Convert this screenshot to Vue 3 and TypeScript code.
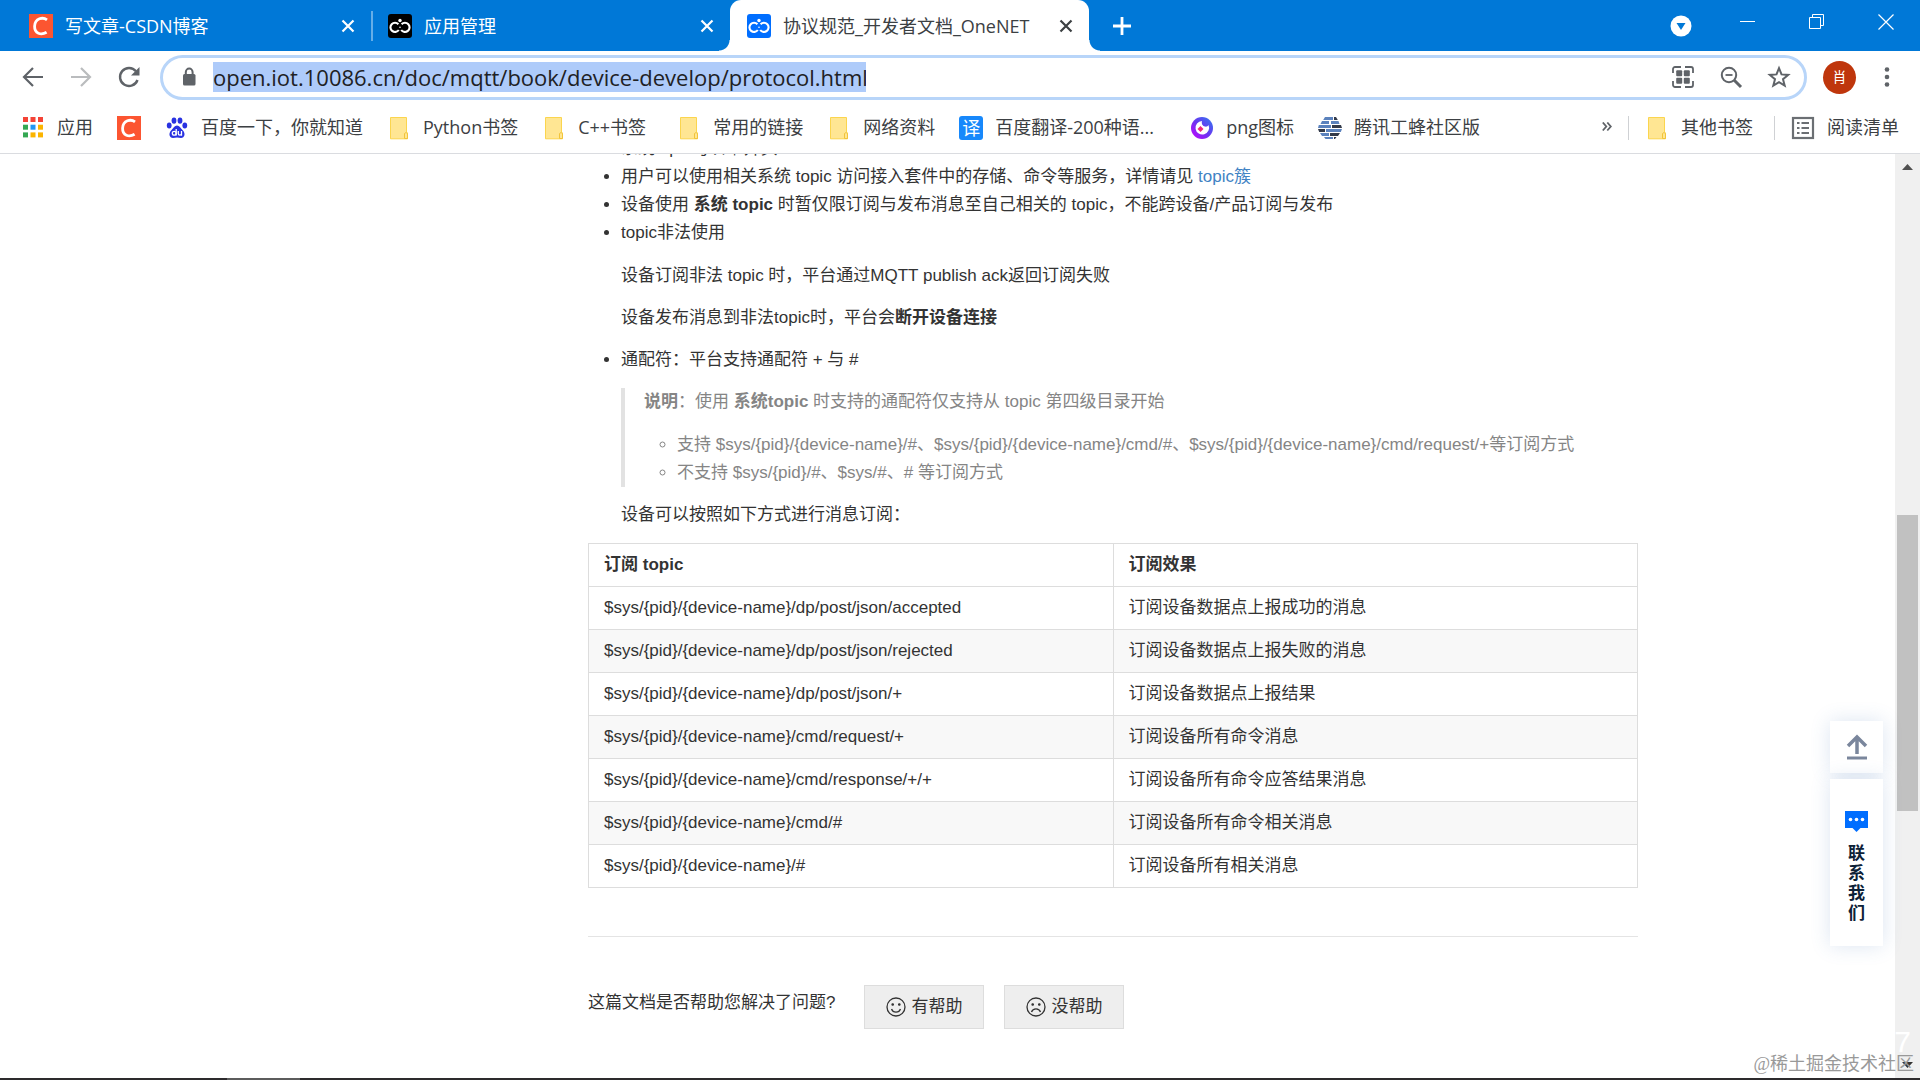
<script setup lang="ts">
import { ref } from 'vue'

interface Tab { title: string; icon: 'csdn' | 'onenet-dark' | 'onenet'; active: boolean }
interface Bookmark { label: string; icon: string; size?: 'wide' | 'short' }
interface Row { topic: string; effect: string }

const url = ref('open.iot.10086.cn/doc/mqtt/book/device-develop/protocol.html')

const tabs: Tab[] = [
  { title: '写文章-CSDN博客', icon: 'csdn', active: false },
  { title: '应用管理', icon: 'onenet-dark', active: false },
  { title: '协议规范_开发者文档_OneNET', icon: 'onenet', active: true },
]

const bookmarks: Bookmark[] = [
  { label: '应用', icon: 'apps' },
  { label: '', icon: 'csdn' },
  { label: '百度一下，你就知道', icon: 'baidu' },
  { label: 'Python书签', icon: 'folder' },
  { label: 'C++书签', icon: 'folder', size: 'short' },
  { label: '常用的链接', icon: 'folder' },
  { label: '网络资料', icon: 'folder' },
  { label: '百度翻译-200种语...', icon: 'fanyi', size: 'wide' },
  { label: 'png图标', icon: 'png' },
  { label: '腾讯工蜂社区版', icon: 'gongfeng' },
]

const appColors = ['#f44336', '#f44336', '#f44336', '#34a853', '#2196f3', '#fbb400', '#34a853', '#fbb400', '#fbb400']

const rows: Row[] = [
  { topic: '$sys/{pid}/{device-name}/dp/post/json/accepted', effect: '订阅设备数据点上报成功的消息' },
  { topic: '$sys/{pid}/{device-name}/dp/post/json/rejected', effect: '订阅设备数据点上报失败的消息' },
  { topic: '$sys/{pid}/{device-name}/dp/post/json/+', effect: '订阅设备数据点上报结果' },
  { topic: '$sys/{pid}/{device-name}/cmd/request/+', effect: '订阅设备所有命令消息' },
  { topic: '$sys/{pid}/{device-name}/cmd/response/+/+', effect: '订阅设备所有命令应答结果消息' },
  { topic: '$sys/{pid}/{device-name}/cmd/#', effect: '订阅设备所有命令相关消息' },
  { topic: '$sys/{pid}/{device-name}/#', effect: '订阅设备所有相关消息' },
]
</script>

<template>
  <div class="browser">
    <header class="tabstrip">
      <div v-for="tab in tabs" :key="tab.title" class="tab" :class="{ active: tab.active }">
        <svg v-if="tab.icon === 'csdn'" class="fav" viewBox="0 0 24 24">
          <rect width="24" height="24" fill="#fc5531" />
          <path d="M18 5.8C14 2.8 6 4 5.6 12.2 5.4 19.5 12 21.5 17.6 18.2" fill="none" stroke="#fff" stroke-width="2.8" />
        </svg>
        <svg v-else class="fav" viewBox="0 0 24 24">
          <rect width="24" height="24" rx="3" :fill="tab.icon === 'onenet' ? '#006eff' : '#000'" />
          <g fill="none" stroke="#fff" stroke-width="2.1">
            <path d="M10.4 10.2A4.6 4.6 0 1 0 10.8 16" />
            <path d="M13.6 10.2A4.6 4.6 0 1 1 13.2 16" />
          </g>
          <circle cx="12" cy="6.5" r="1.7" fill="#fff" />
          <circle cx="12" cy="13.2" r=".8" fill="#fff" />
        </svg>
        <span class="tab-title">{{ tab.title }}</span>
        <button class="tab-close" aria-label="关闭标签页">
          <svg width="14" height="14" viewBox="0 0 14 14"><path d="M1.5 1.5l11 11M12.5 1.5l-11 11" stroke="currentColor" stroke-width="2.2" /></svg>
        </button>
      </div>
      <button class="new-tab" aria-label="新标签页">
        <svg width="18" height="18" viewBox="0 0 18 18"><path d="M9 0v18M0 9h18" stroke="#fff" stroke-width="2.8" /></svg>
      </button>
      <div class="window-controls">
        <button class="search-tabs" aria-label="搜索标签页">
          <svg width="22" height="22" viewBox="0 0 22 22"><circle cx="11" cy="11" r="10.5" fill="#fff" /><path d="M6.5 8h9L11 15z" fill="#0078d7" /></svg>
        </button>
        <button class="win" aria-label="最小化"><svg width="16" height="16" viewBox="0 0 16 16"><path d="M0 7.5h15" stroke="#fff" /></svg></button>
        <button class="win" aria-label="还原"><svg width="16" height="16" viewBox="0 0 16 16"><path d="M.5 3.5h11v11H.5zM3.5 3.5v-3h11v11h-3" fill="none" stroke="#fff" /></svg></button>
        <button class="win" aria-label="关闭"><svg width="16" height="16" viewBox="0 0 16 16"><path d="M.5.5l15 15M15.5.5l-15 15" stroke="#fff" stroke-width="1.2" /></svg></button>
      </div>
    </header>

    <nav class="toolbar">
      <button class="tool" aria-label="后退"><svg width="24" height="24" viewBox="0 0 24 24"><path d="M22 12H3M12 3l-9 9 9 9" fill="none" stroke="#5f6368" stroke-width="2.2" /></svg></button>
      <button class="tool" aria-label="前进"><svg width="24" height="24" viewBox="0 0 24 24"><path d="M2 12h19M12 3l9 9-9 9" fill="none" stroke="#babcbe" stroke-width="2.2" /></svg></button>
      <button class="tool" aria-label="重新加载">
        <svg width="24" height="24" viewBox="0 0 24 24"><path d="M20.5 15A9 9 0 1 1 19 6.3" fill="none" stroke="#5f6368" stroke-width="2.4" /><path d="M22.5 2v8.5H14z" fill="#5f6368" /></svg>
      </button>
      <div class="omnibox">
        <svg class="lock" width="20" height="22" viewBox="0 0 20 22"><rect x="4" y="8" width="12.5" height="11.5" rx="1.5" fill="#5f6368" /><path d="M6.8 9V6a3.4 3.4 0 0 1 6.8 0v3" fill="none" stroke="#5f6368" stroke-width="2" /></svg>
        <input v-model="url" class="url" type="text" aria-label="地址栏" spellcheck="false" />
        <div class="omni-actions">
          <button class="tool" aria-label="二维码">
            <svg width="24" height="24" viewBox="0 0 24 24"><path d="M2 8V4a2 2 0 0 1 2-2h6M14 2h6a2 2 0 0 1 2 2v4M22 16v4a2 2 0 0 1-2 2h-6M10 22H4a2 2 0 0 1-2-2v-4" fill="none" stroke="#5f6368" stroke-width="1.8" /><g fill="#5f6368"><rect x="5.2" y="5.2" width="6" height="6" rx="1" /><rect x="12.8" y="5.2" width="6" height="6" rx="1" /><rect x="5.2" y="12.8" width="6" height="6" rx="1" /><rect x="12.8" y="12.8" width="6" height="6" rx="1" /></g></svg>
          </button>
          <button class="tool" aria-label="缩放">
            <svg width="24" height="24" viewBox="0 0 24 24"><circle cx="10" cy="10" r="7.2" fill="none" stroke="#5f6368" stroke-width="2" /><path d="M6.5 10h7" stroke="#5f6368" stroke-width="1.8" /><path d="M15 15l7 7" stroke="#5f6368" stroke-width="3" /></svg>
          </button>
          <button class="tool" aria-label="收藏">
            <svg width="24" height="24" viewBox="0 0 24 24"><path d="M12 3.2l2.5 6.2 6.7.5-5.2 4.3 1.7 6.5-5.7-3.5-5.7 3.5L8 14.2 2.8 9.9l6.700-.5z" fill="none" stroke="#5f6368" stroke-width="2" /></svg>
          </button>
        </div>
      </div>
      <button class="avatar" aria-label="个人资料">肖</button>
      <button class="tool menu" aria-label="菜单"><svg width="24" height="24" viewBox="0 0 24 24"><g fill="#5f6368"><circle cx="12" cy="4.5" r="2.3" /><circle cx="12" cy="12" r="2.3" /><circle cx="12" cy="19.5" r="2.3" /></g></svg></button>
    </nav>

    <div class="bookmarks">
      <a v-for="(b, i) in bookmarks" :key="i" href="#" class="bookmark" :aria-label="b.label || 'CSDN'">
        <svg v-if="b.icon === 'apps'" class="fav" viewBox="0 0 24 24">
          <rect v-for="(c, n) in appColors" :key="n" :x="2 + (n % 3) * 7.5" :y="1 + Math.floor(n / 3) * 7.7" width="5" height="5" :fill="c" />
        </svg>
        <svg v-else-if="b.icon === 'csdn'" class="fav" viewBox="0 0 24 24">
          <rect width="24" height="24" fill="#fc5531" />
          <path d="M18 5.8C14 2.8 6 4 5.6 12.2 5.4 19.5 12 21.5 17.6 18.2" fill="none" stroke="#fff" stroke-width="2.8" />
        </svg>
        <svg v-else-if="b.icon === 'baidu'" class="fav" viewBox="0 0 24 24">
          <g fill="#2932e1"><ellipse cx="4.2" cy="9.6" rx="2.4" ry="3" /><ellipse cx="9" cy="4.6" rx="2.4" ry="3.2" /><ellipse cx="15" cy="4.6" rx="2.4" ry="3.2" /><ellipse cx="19.8" cy="9.6" rx="2.4" ry="3" /><path d="M12 9.5c2.5 0 3.5 2.5 5.5 4.4 3.5 3.3 2.2 8-1.5 8-1.5 0-2.500-.4-4-.4s-2.500.4-4 .4c-3.700 0-5-4.700-1.500-8C8.500 12 9.500 9.500 12 9.500z" /></g>
          <g fill="none" stroke="#fff" stroke-width="1.3"><circle cx="9.2" cy="17.3" r="1.9" /><path d="M11.2 13v6.5M13.3 15v2.8c0 1.8 3.2 1.8 3.2 0V15v4.8" /></g>
        </svg>
        <svg v-else-if="b.icon === 'folder'" class="fav" viewBox="0 0 24 24">
          <path d="M3.5 1.5h16V16l1 .8v6h-17z" fill="#ffe693" stroke="#fbd54e" /><path d="M17.5 22.5v-5l1.5-1 1.5 1v5z" fill="#ffe693" stroke="#f2c43a" />
        </svg>
        <span v-else-if="b.icon === 'fanyi'" class="fav fanyi">译</span>
        <svg v-else-if="b.icon === 'png'" class="fav" viewBox="0 0 24 24">
          <defs><linearGradient id="ring" x1="0" y1="1" x2="1" y2="0"><stop offset="0" stop-color="#c800ff" /><stop offset=".5" stop-color="#6a35f0" /><stop offset="1" stop-color="#2f7df0" /></linearGradient></defs>
          <circle cx="12" cy="12" r="11" fill="url(#ring)" />
          <path d="M12 5c-.8 3 .8 5 3 5.600 1.500.4 2.800-.4 3.500-1.600A6.800 6.800 0 1 1 12 5z" fill="#fff" />
          <path d="M10.500 10l3 3-3 3-3-3z" fill="#f0287a" />
        </svg>
        <svg v-else class="fav" viewBox="0 0 24 24">
          <g fill="#5b82bd"><path d="M7 1h8v3H5.2z" /><path d="M4 5h7v3H2.5zM13 5h7.500l1 3H13zM0 12l.8-3H13v3zM8 13h16l-1.200 3H8zM2 17h9v3H4zM6 21h9v2H7.500z" /></g>
          <g fill="#333a49"><path d="M16 1h2l1.800 3H16zM14 9h9l1 3H14zM0 13h7v3H1.200zM12 17h10l-2 3h-8zM16 21h2.500L17 23h-1z" /></g>
        </svg>
        <span v-if="b.label" class="name" :class="b.size">{{ b.label }}</span>
      </a>
      <div class="bookmarks-end">
        <button class="more" aria-label="更多书签"><svg width="10" height="10" viewBox="0 0 10 10"><path d="M.8.5l3.500 4-3.500 4M5.300.5l3.500 4-3.500 4" fill="none" stroke="#5f6368" stroke-width="1.8" /></svg></button>
        <i class="rule"></i>
        <a href="#" class="bookmark">
          <svg class="fav" viewBox="0 0 24 24"><path d="M3.5 1.5h16V16l1 .8v6h-17z" fill="#ffe693" stroke="#fbd54e" /><path d="M17.5 22.5v-5l1.5-1 1.5 1v5z" fill="#ffe693" stroke="#f2c43a" /></svg>
          <span class="name">其他书签</span>
        </a>
        <i class="rule reading"></i>
        <a href="#" class="bookmark">
          <svg class="fav" viewBox="0 0 24 24"><rect x="2" y="2" width="20" height="20" fill="none" stroke="#6b6f73" stroke-width="2.2" /><path d="M6 7h2.5M10.5 7H18M6 12h2.5M10.5 12H18M6 17h2.5M10.5 17H18" stroke="#6b6f73" stroke-width="2" /></svg>
          <span class="name">阅读清单</span>
        </a>
      </div>
    </div>

    <div class="viewport">
      <main class="doc">
        <ul class="points">
          <li>系统topic均以 $ 开头</li>
          <li>用户可以使用相关系统 topic 访问接入套件中的存储、命令等服务，详情请见 <a href="#">topic簇</a></li>
          <li>设备使用 <strong>系统 topic</strong> 时暂仅限订阅与发布消息至自己相关的 topic，不能跨设备/产品订阅与发布</li>
          <li>
            topic非法使用
            <p>设备订阅非法 topic 时，平台通过MQTT publish ack返回订阅失败</p>
            <p>设备发布消息到非法topic时，平台会<strong>断开设备连接</strong></p>
          </li>
          <li>
            通配符：平台支持通配符 + 与 #
            <blockquote>
              <strong>说明</strong>：使用 <strong>系统topic</strong> 时支持的通配符仅支持从 topic 第四级目录开始
              <ul>
                <li>支持 $sys/{pid}/{device-name}/#、$sys/{pid}/{device-name}/cmd/#、$sys/{pid}/{device-name}/cmd/request/+等订阅方式</li>
                <li>不支持 $sys/{pid}/#、$sys/#、# 等订阅方式</li>
              </ul>
            </blockquote>
            设备可以按照如下方式进行消息订阅：
          </li>
        </ul>
        <table>
          <thead><tr><th scope="col">订阅 topic</th><th scope="col">订阅效果</th></tr></thead>
          <tbody><tr v-for="r in rows" :key="r.topic"><td>{{ r.topic }}</td><td>{{ r.effect }}</td></tr></tbody>
        </table>
        <hr />
        <div class="feedback">
          <span class="question">这篇文档是否帮助您解决了问题?</span>
          <button class="vote">
            <svg width="20" height="20" viewBox="0 0 20 20" fill="none" stroke="#333" stroke-width="1.3"><circle cx="10" cy="10" r="9" /><path d="M5.5 12c1.500 4.200 7.500 4.200 9 0" /><circle cx="6.700" cy="7.5" r=".7" fill="#333" /><circle cx="13.300" cy="7.5" r=".7" fill="#333" /></svg>
            有帮助
          </button>
          <button class="vote">
            <svg width="20" height="20" viewBox="0 0 20 20" fill="none" stroke="#333" stroke-width="1.3"><circle cx="10" cy="10" r="9" /><path d="M5.5 15c1.500-4.200 7.500-4.200 9 0" /><circle cx="6.700" cy="7.5" r=".7" fill="#333" /><circle cx="13.300" cy="7.5" r=".7" fill="#333" /></svg>
            没帮助
          </button>
        </div>
      </main>

      <div class="scrollbar">
        <svg width="11" height="6" viewBox="0 0 11 6"><path d="M5.5 0L11 6H0z" fill="#505050" /></svg>
        <div class="track"><div class="thumb"></div></div>
        <svg width="11" height="6" viewBox="0 0 11 6"><path d="M0 0h11L5.5 6z" fill="#333" /></svg>
      </div>

      <aside class="float">
        <button class="to-top" aria-label="回到顶部">
          <svg width="22" height="26" viewBox="0 0 22 26"><path d="M11 20V3M2 12l9-9 9 9" fill="none" stroke="#7a869c" stroke-width="3.5" /><path d="M1 24h20" stroke="#7a869c" stroke-width="3" /></svg>
        </button>
        <button class="contact">
          <svg width="23" height="21" viewBox="0 0 23 21"><path d="M0 0h23v17h-7.5l-4 4-4-4H0z" fill="#006eff" /><g fill="#fff"><circle cx="5.5" cy="8.5" r="1.8" /><circle cx="11.5" cy="8.5" r="1.8" /><circle cx="17.5" cy="8.5" r="1.8" /></g></svg>
          <span>联系我们</span>
        </button>
      </aside>
      <span class="seven">7</span>
      <span class="watermark">@稀土掘金技术社区</span>
    </div>
    <footer class="taskbar"><i></i></footer>
  </div>
</template>

<style>
body { margin: 0; overflow: hidden; }
</style>

<style scoped>
* { box-sizing: border-box; }
button { border: 0; padding: 0; background: none; font: inherit; color: inherit; }
svg { display: block; flex: none; }
.browser { display: flex; flex-direction: column; height: 100vh; overflow: hidden; background: #fff; color: #3c4043; font: 18px/24px "Open Sans", "Noto Sans CJK SC", sans-serif; }
.fav { width: 24px; height: 24px; flex: none; }

.tabstrip { display: flex; flex: none; height: 51px; padding-left: 12px; background: #0078d7; }
.tab { position: relative; display: flex; align-items: center; width: 359px; padding: 0 16px 0 17px; color: #fff; }
.tab:first-child::after { content: ""; position: absolute; right: -2px; top: 11px; width: 2px; height: 30px; background: #65aee8; }
.tab-title { flex: 1; margin-left: 12px; white-space: nowrap; }
.tab-close { display: flex; }
.tab.active { background: #fff; color: #3c4043; border-radius: 11px 11px 0 0; }
.tab.active::before, .tab.active::after { content: ""; position: absolute; bottom: 0; width: 11px; height: 11px; }
.tab.active::before { left: -11px; background: radial-gradient(circle at 0 0, transparent 10px, #fff 11px); }
.tab.active::after { right: -11px; background: radial-gradient(circle at 100% 0, transparent 10px, #fff 11px); }
.new-tab { display: flex; align-items: center; margin-left: 24px; }
.window-controls { display: flex; margin-left: auto; }
.search-tabs { display: flex; align-items: center; margin-right: 21px; }
.win { display: flex; align-items: center; justify-content: center; width: 69px; height: 43px; }

.toolbar { display: flex; flex: none; align-items: center; height: 51px; padding: 3px 9px 2px; }
.tool { display: flex; align-items: center; justify-content: center; width: 48px; height: 40px; }
.omnibox { display: flex; flex: 1; align-items: center; height: 45px; margin: 0 16px 0 7px; padding: 0 1px 0 16px; border: 3px solid #b8d5f9; border-radius: 23px; }
.lock { margin-right: 14px; }
.url { width: 653px; height: 30px; padding: 0; border: 0; outline: 0; background: #aecbfa; color: #202124; font: 22px/30px "Open Sans", sans-serif; }
.omni-actions { display: flex; margin-left: auto; }
.avatar { width: 33px; height: 33px; border-radius: 50%; background: #bf360c; color: #fff; font-size: 14px; }
.menu { margin-left: 7px; }

.bookmarks { display: flex; flex: none; align-items: center; gap: 24px; height: 52px; padding: 0 21px; border-bottom: 1px solid #dadce0; }
.bookmark { display: flex; align-items: center; gap: 12px; color: inherit; text-decoration: none; white-space: nowrap; }
.name { padding-bottom: 2px; }
.short { width: 75px; }
.wide { width: 171px; }
.fanyi { border-radius: 3px; background: #1788fb; color: #fff; font-size: 18px; line-height: 24px; text-align: center; }
.bookmarks-end { display: flex; align-items: center; margin-left: auto; }
.more svg { margin-bottom: 2px; }
.rule { width: 1px; height: 24px; margin: 0 16px; background: #cfd1d4; }
.rule.reading { margin-left: 21px; }

.viewport { position: relative; display: flex; flex: 1; min-height: 0; overflow: hidden; }
.doc { flex: 1; min-width: 0; margin-top: -19px; padding: 0 257px 0 588px; color: #333; font: 17px/28px "Liberation Sans", "Noto Sans CJK SC", sans-serif; }
.points { margin: 0 0 14px; padding-left: 33px; }
.doc a { color: #4183c4; text-decoration: none; }
.doc p { margin: 14px 0; }
.doc p:first-of-type { margin-top: 15px; }
.doc blockquote { margin: 14px 0; padding-left: 19px; border-left: 4px solid #e2e2e2; color: #858585; }
blockquote ul { margin: 15px 0 0; padding-left: 33px; list-style: circle; }
table { width: 100%; border-collapse: collapse; table-layout: fixed; }
th, td { height: 43px; padding: 0 15px; border: 1px solid #ddd; text-align: left; }
tbody tr:nth-child(even) { background: #f8f8f8; }
hr { margin: 48px 0; border: 0; border-top: 1px solid #e4e4e4; }
.feedback { display: flex; align-items: flex-start; gap: 20px; }
.question { margin: 4px 9px 0 0; }
.vote { display: flex; align-items: center; justify-content: center; gap: 5px; width: 120px; height: 44px; border: 1px solid #ddd; background: #eee; }

.scrollbar { display: flex; flex: none; flex-direction: column; align-items: center; width: 25px; padding: 10px 0; background: #f0f0f0; }
.track { flex: 1; width: 21px; padding-top: 345px; }
.thumb { height: 296px; background: #c1c1c1; }

.float { position: absolute; right: 37px; bottom: 132px; display: flex; flex-direction: column; gap: 6px; width: 53px; }
.float button { display: flex; flex-direction: column; align-items: center; background: #fff; box-shadow: 0 0 20px rgba(60, 110, 180, .18); }
.to-top { height: 52px; justify-content: center; }
.contact { height: 167px; padding-top: 32px; color: #0d2137; font-size: 17px; line-height: 20px; font-weight: 600; }
.contact span { width: 17px; margin-top: 11px; overflow-wrap: anywhere; }
.seven { position: absolute; right: 9px; bottom: 18px; color: #fff; font: 30px/36px "Liberation Sans", sans-serif; }
.watermark { position: absolute; right: 6px; bottom: 2px; color: #999; font: 18px/24px "Liberation Serif", "Noto Sans CJK SC", serif; }
.taskbar { flex: none; height: 2px; padding-left: 227px; background: #2d2b2d; }
.taskbar i { display: block; width: 73px; height: 2px; background: #5c5c5c; }
</style>
